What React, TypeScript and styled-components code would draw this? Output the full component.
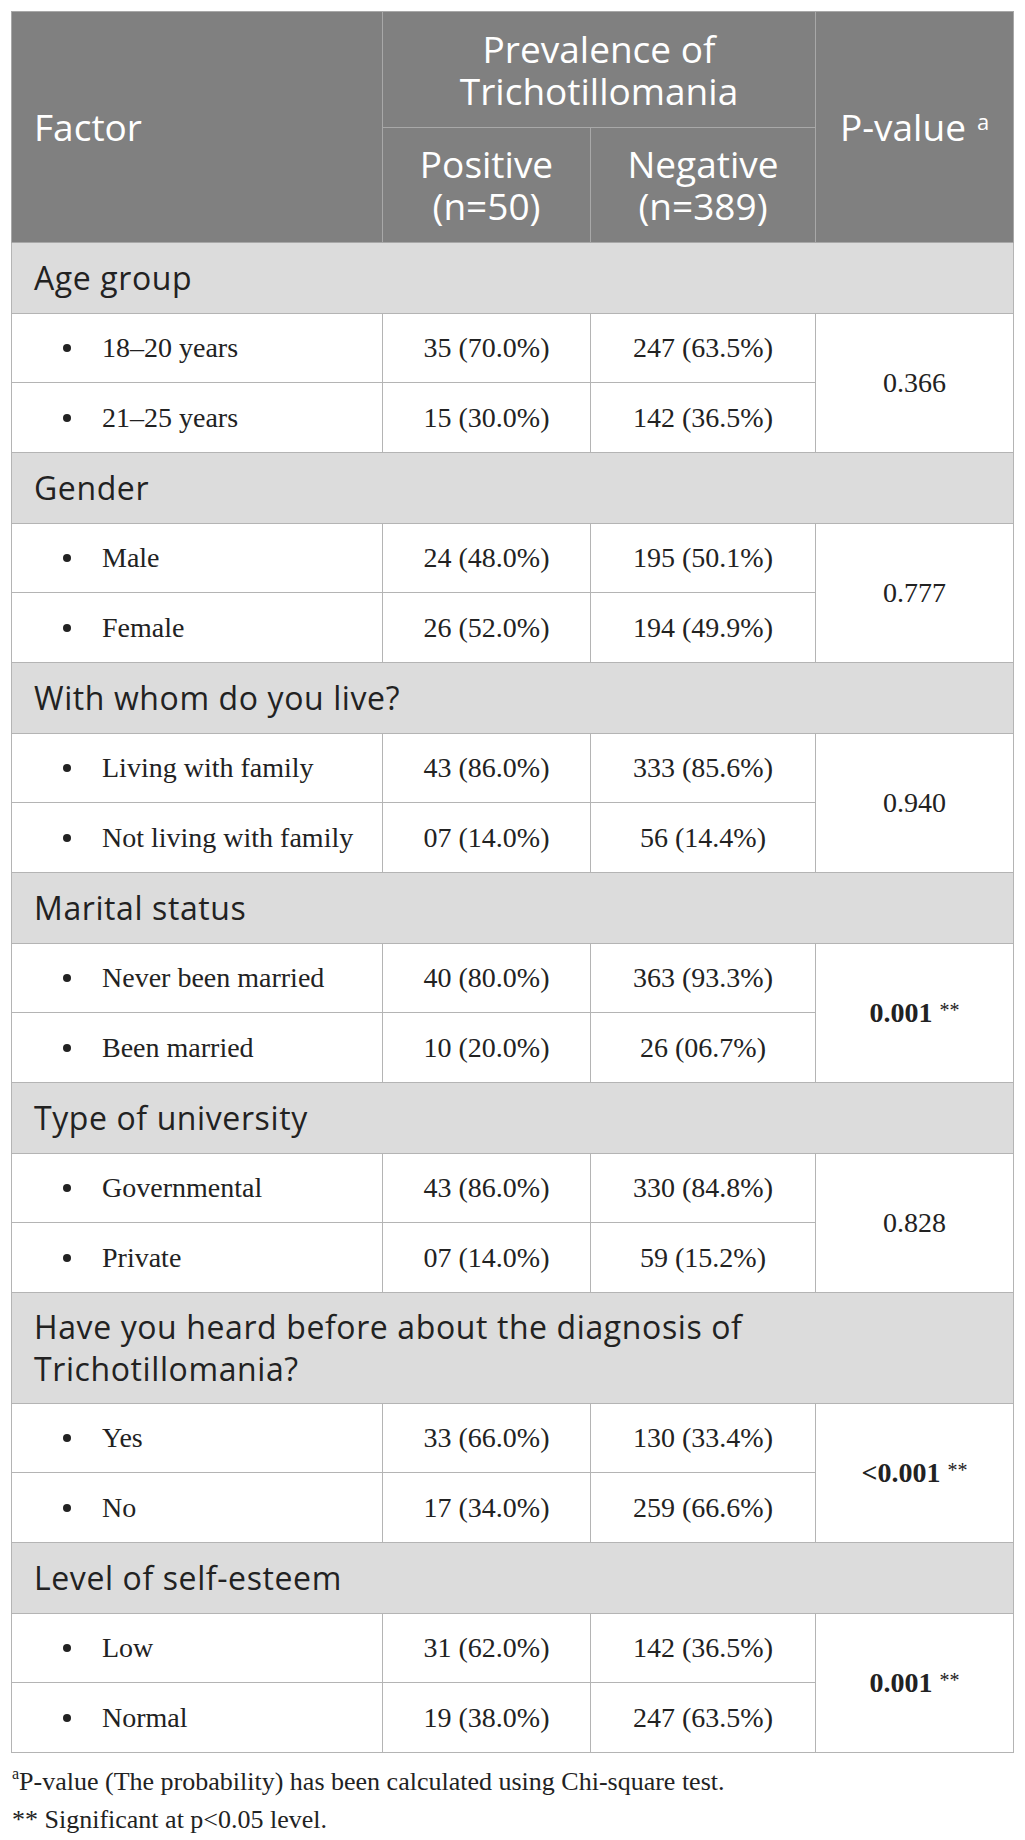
import styled, { createGlobalStyle } from 'styled-components';

const GlobalStyle = createGlobalStyle`
  body {
    margin: 0;
    background: #ffffff;
  }
`;

const Page = styled.div`
  padding: 11px 12px 24px 11px;
  width: 1002px;
`;

const Table = styled.table`
  width: 1002px;
  border-collapse: collapse;
  table-layout: fixed;
  font-family: 'Liberation Serif', 'Times New Roman', serif;
  color: #222222;
`;

const HeadCell = styled.th<{ $left?: boolean; $h: number }>`
  height: ${(p) => p.$h}px;
  padding: 0 ${(p) => (p.$left ? '0 0 22px' : '8px')};
  background: #808080;
  color: #ffffff;
  font-family: 'Open Sans', 'Noto Sans', sans-serif;
  font-weight: 400;
  font-size: 37px;
  line-height: 42px;
  text-align: ${(p) => (p.$left ? 'left' : 'center')};
  vertical-align: middle;
  border: 1px solid #a8a8a8;
  box-sizing: border-box;
  sup {
    font-size: 22px;
    vertical-align: top;
    line-height: 30px;
    margin-left: 11px;
  }
`;

const SectionCell = styled.td`
  height: 71px;
  padding: 13px 22px;
  background: #dcdcdc;
  font-family: 'Open Sans', 'Noto Sans', sans-serif;
  font-size: 32px;
  letter-spacing: 0.6px;
  line-height: 42px;
  color: #222222;
  white-space: pre-line;
  border: 1px solid #b4b4b4;
  box-sizing: border-box;
  vertical-align: middle;
`;

const Cell = styled.td<{ $h: number }>`
  height: ${(p) => p.$h}px;
  padding: 0 6px;
  font-size: 28px;
  text-align: center;
  vertical-align: middle;
  border: 1px solid #b4b4b4;
  box-sizing: border-box;
`;

const LabelCell = styled(Cell)`
  text-align: left;
  padding-left: 22px;
`;

const Item = styled.div`
  display: flex;
  align-items: center;
  gap: 31px;
`;

const Dot = styled.span`
  width: 8px;
  height: 8px;
  margin-left: 29px;
  border-radius: 50%;
  background: #222222;
  flex: none;
`;

const PValue = styled.span<{ $bold?: boolean }>`
  font-weight: ${(p) => (p.$bold ? 700 : 400)};
`;

const Stars = styled.span`
  font-size: 20px;
  vertical-align: top;
  line-height: 26px;
  margin-left: 7px;
`;

const Notes = styled.div`
  margin-top: 10px;
  padding-left: 1px;
  font-family: 'Liberation Serif', 'Times New Roman', serif;
  font-size: 26px;
  line-height: 38px;
  color: #222222;
  sup {
    font-size: 16px;
    vertical-align: top;
    line-height: 22px;
  }
`;

interface Section {
  title: string;
  rows: [string, string, string][];
  p: string;
  significant?: boolean;
}

const sections: Section[] = [
  {
    title: 'Age group',
    rows: [
      ['18–20 years', '35 (70.0%)', '247 (63.5%)'],
      ['21–25 years', '15 (30.0%)', '142 (36.5%)'],
    ],
    p: '0.366',
  },
  {
    title: 'Gender',
    rows: [
      ['Male', '24 (48.0%)', '195 (50.1%)'],
      ['Female', '26 (52.0%)', '194 (49.9%)'],
    ],
    p: '0.777',
  },
  {
    title: 'With whom do you live?',
    rows: [
      ['Living with family', '43 (86.0%)', '333 (85.6%)'],
      ['Not living with family', '07 (14.0%)', '56 (14.4%)'],
    ],
    p: '0.940',
  },
  {
    title: 'Marital status',
    rows: [
      ['Never been married', '40 (80.0%)', '363 (93.3%)'],
      ['Been married', '10 (20.0%)', '26 (06.7%)'],
    ],
    p: '0.001',
    significant: true,
  },
  {
    title: 'Type of university',
    rows: [
      ['Governmental', '43 (86.0%)', '330 (84.8%)'],
      ['Private', '07 (14.0%)', '59 (15.2%)'],
    ],
    p: '0.828',
  },
  {
    title: 'Have you heard before about the diagnosis of\nTrichotillomania?',
    rows: [
      ['Yes', '33 (66.0%)', '130 (33.4%)'],
      ['No', '17 (34.0%)', '259 (66.6%)'],
    ],
    p: '<0.001',
    significant: true,
  },
  {
    title: 'Level of self-esteem',
    rows: [
      ['Low', '31 (62.0%)', '142 (36.5%)'],
      ['Normal', '19 (38.0%)', '247 (63.5%)'],
    ],
    p: '0.001',
    significant: true,
  },
];

function App() {
  return (
    <Page>
      <GlobalStyle />
      <Table>
        <colgroup>
          <col style={{ width: 371 }} />
          <col style={{ width: 208 }} />
          <col style={{ width: 225 }} />
          <col style={{ width: 198 }} />
        </colgroup>
        <thead>
          <tr>
            <HeadCell rowSpan={2} $left $h={116}>
              Factor
            </HeadCell>
            <HeadCell colSpan={2} $h={116}>
              Prevalence of
              <br />
              Trichotillomania
            </HeadCell>
            <HeadCell rowSpan={2} $h={116}>
              P-value<sup>a</sup>
            </HeadCell>
          </tr>
          <tr>
            <HeadCell $h={115}>
              Positive
              <br />
              (n=50)
            </HeadCell>
            <HeadCell $h={115}>
              Negative
              <br />
              (n=389)
            </HeadCell>
          </tr>
        </thead>
        {sections.map((s) => (
          <tbody key={s.title}>
            <tr>
              <SectionCell colSpan={4}>{s.title}</SectionCell>
            </tr>
            {s.rows.map((r, i) => (
              <tr key={r[0]}>
                <LabelCell $h={i === 0 ? 69 : 70}>
                  <Item>
                    <Dot />
                    {r[0]}
                  </Item>
                </LabelCell>
                <Cell $h={i === 0 ? 69 : 70}>{r[1]}</Cell>
                <Cell $h={i === 0 ? 69 : 70}>{r[2]}</Cell>
                {i === 0 && (
                  <Cell rowSpan={2} $h={139}>
                    <PValue $bold={s.significant}>{s.p}</PValue>
                    {s.significant && <Stars>**</Stars>}
                  </Cell>
                )}
              </tr>
            ))}
          </tbody>
        ))}
      </Table>
      <Notes>
        <div>
          <sup>a</sup>P-value (The probability) has been calculated using Chi-square test.
        </div>
        <div>** Significant at p&lt;0.05 level.</div>
      </Notes>
    </Page>
  );
}

export default App;
